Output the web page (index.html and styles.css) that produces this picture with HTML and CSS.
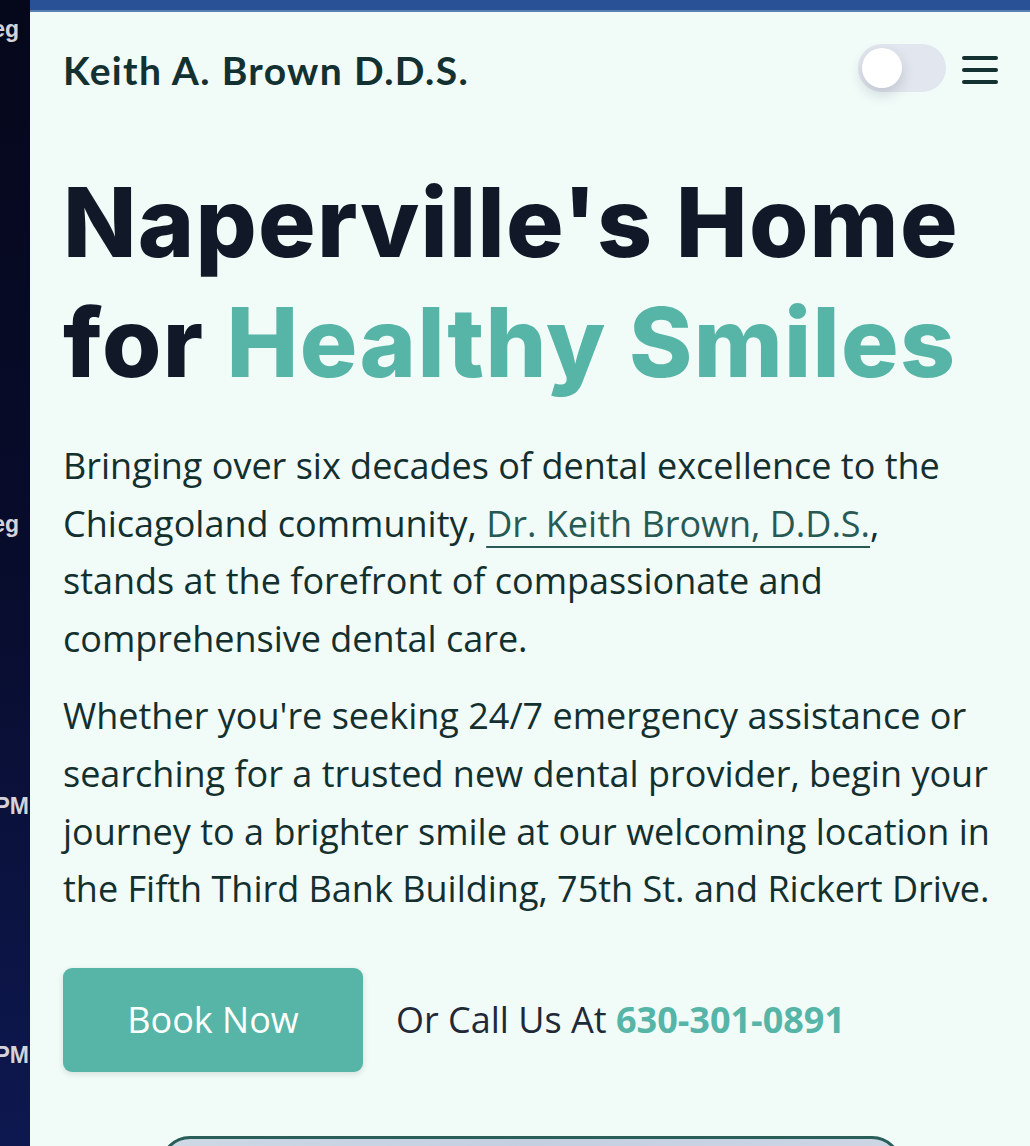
FILE: index.html
```html
<!DOCTYPE html>
<html lang="en">
<head>
<meta charset="utf-8">
<title>Keith A. Brown D.D.S.</title>
<link rel="stylesheet" href="styles.css">
</head>
<body>
<aside class="strip">
  <div class="lbl lbl-a">Reg</div>
  <div class="lbl lbl-b">Reg</div>
  <div class="lbl lbl-c">PM</div>
  <div class="lbl lbl-d">PM</div>
</aside>
<main class="page">
  <header class="topbar">
    <div class="logo">Keith A. Brown D.D.S.</div>
    <div class="controls">
      <div class="toggle"><span class="knob"></span></div>
      <svg class="menu" width="36" height="32" viewBox="0 0 36 32" aria-hidden="true">
        <line x1="2" y1="4" x2="34" y2="4"/>
        <line x1="2" y1="16" x2="34" y2="16"/>
        <line x1="2" y1="28" x2="34" y2="28"/>
      </svg>
    </div>
  </header>
  <section class="hero">
    <h1 class="title">Naperville's Home for <span class="accent">Healthy Smiles</span></h1>
    <p class="lead">Bringing over six decades of dental excellence to the Chicagoland community, <a class="link" href="#">Dr. Keith Brown, D.D.S.</a>, stands at the forefront of compassionate and comprehensive dental care.</p>
    <p class="lead">Whether you're seeking 24/7 emergency assistance or searching for a trusted new dental provider, begin your journey to a brighter smile at our welcoming location in the Fifth Third Bank Building, 75th St. and Rickert Drive.</p>
    <div class="cta">
      <a class="btn" href="#">Book Now</a>
      <span class="call">Or Call Us At <strong class="phone">630-301-0891</strong></span>
    </div>
    <div class="frame"></div>
  </section>
</main>
</body>
</html>
```

FILE: styles.css
```css
html, body {
  margin: 0;
  padding: 0;
  height: 100%;
}
body {
  display: flex;
  overflow: hidden;
  background: #f1fbf8;
}
.strip {
  width: 30px;
  flex: 0 0 30px;
  background: linear-gradient(180deg, #05071a 0%, #080c2c 50%, #0d1850 100%);
  display: flex;
  flex-direction: column;
  overflow: hidden;
  font-family: "Liberation Sans", Arial, sans-serif;
  font-weight: 700;
  font-size: 23px;
  color: #d4d4d8;
}
.lbl {
  white-space: nowrap;
  display: flex;
  justify-content: flex-end;
  line-height: 26px;
}
.lbl-a { margin-top: 16px; padding-right: 11px; }
.lbl-b { margin-top: 469px; padding-right: 11px; }
.lbl-c { margin-top: 256px; padding-right: 1px; }
.lbl-d { margin-top: 223px; padding-right: 1px; }

.page {
  flex: 1;
  min-width: 0;
  background: #f1fbf8;
  border-top: 10px solid #285295;
  box-shadow: inset 0 2px 0 #5a7fb4;
}
.topbar {
  height: 116px;
  display: flex;
  align-items: center;
  justify-content: space-between;
  padding: 0 32px 0 33px;
}
.logo {
  font-family: Lato, "Noto Sans", sans-serif;
  font-weight: 700;
  font-size: 39px;
  color: #133130;
  letter-spacing: 1.35px;
  padding-top: 3px;
}
.controls {
  display: flex;
  align-items: center;
  gap: 16px;
}
.toggle {
  width: 88px;
  height: 48px;
  border-radius: 24px;
  background: #e2e6ee;
  display: flex;
  align-items: center;
  padding: 0 4px;
  box-sizing: border-box;
}
.knob {
  width: 40px;
  height: 40px;
  border-radius: 50%;
  background: #ffffff;
  box-shadow: 0 6px 14px rgba(30, 40, 70, 0.18);
}
.menu {
  margin-top: 4px;
}
.menu line {
  stroke: #133130;
  stroke-width: 4;
  stroke-linecap: round;
}
.hero {
  padding: 0 32px 0 33px;
}
.title {
  margin: 36px 0 0;
  font-family: Inter, "Noto Sans", sans-serif;
  font-weight: 800;
  font-size: 96px;
  line-height: 120px;
  color: #111827;
  letter-spacing: 1.3px;
}
.accent {
  color: #56b5a6;
}
.lead {
  margin: 35px 0 0;
  font-family: "Open Sans", "Noto Sans", sans-serif;
  font-size: 36px;
  line-height: 57.6px;
  color: #13302f;
}
.lead + .lead {
  margin-top: 20px;
}
.link {
  color: #285a55;
  text-decoration: underline;
  text-decoration-thickness: 2px;
  text-underline-offset: 9px;
}
.cta {
  display: flex;
  align-items: center;
  gap: 33px;
  margin-top: 50px;
}
.btn {
  width: 300px;
  height: 104px;
  border-radius: 9px;
  background: #56b5a6;
  color: #ffffff;
  font-family: "Open Sans", "Noto Sans", sans-serif;
  font-size: 36px;
  text-decoration: none;
  display: flex;
  align-items: center;
  justify-content: center;
  box-shadow: 0 2px 6px rgba(0, 0, 0, 0.12);
}
.call {
  font-family: "Open Sans", "Noto Sans", sans-serif;
  font-size: 36px;
  color: #1f2937;
}
.phone {
  color: #56b5a6;
  font-weight: 700;
}
.frame {
  width: 736px;
  height: 200px;
  margin: 64px auto 0;
  border: 3px solid #2a5e58;
  border-radius: 30px;
  background: linear-gradient(90deg, #cdd9e4, #c4cfe2 50%, #ccd6e4);
}
```
